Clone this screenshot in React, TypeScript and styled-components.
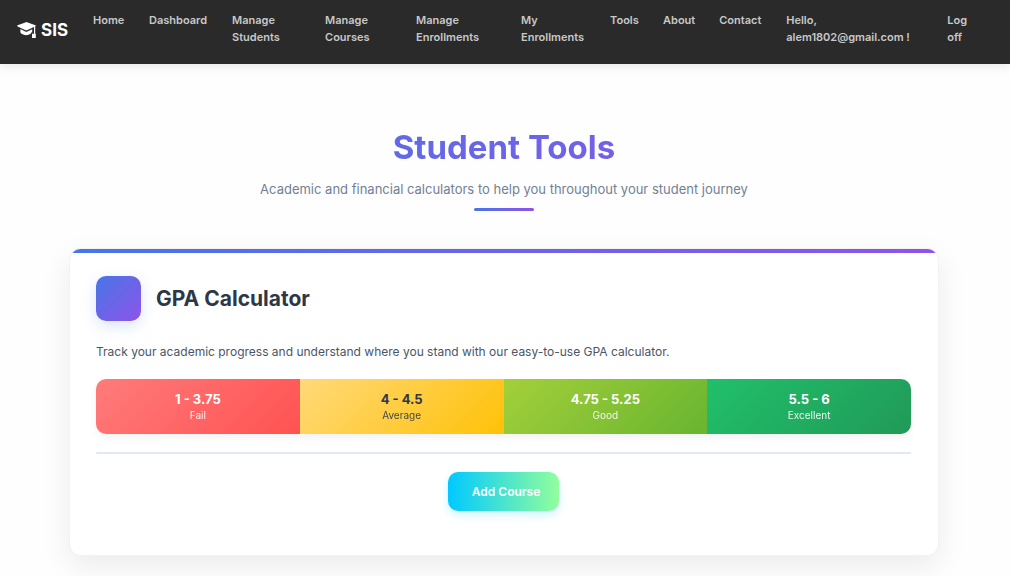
import React from "react";
import styled, { createGlobalStyle } from "styled-components";

const GlobalStyle = createGlobalStyle`
  *, *::before, *::after { box-sizing: border-box; }
  body {
    margin: 0;
    background: #fefefe;
    color: #2d3748;
    font-family: Inter, "Liberation Sans", sans-serif;
    font-size: 12px;
  }
`;

const Navbar = styled.header`
  display: flex;
  align-items: center;
  min-height: 64px;
  padding: 0 12px 0 17px;
  background: #2a2a2a;
  box-shadow: 0 2px 10px rgba(0, 0, 0, 0.1);
`;

const Brand = styled.a`
  display: flex;
  flex: none;
  align-items: center;
  gap: 5px;
  margin: 0 13px 4px 0;
  color: #fff;
  font-size: 17px;
  font-weight: 700;
  line-height: 24px;
  text-decoration: none;
`;

const NavList = styled.ul`
  display: flex;
  flex: 1;
  min-width: 0;
  margin: 0;
  padding: 12px 0 18px;
  list-style: none;
`;

const NavItem = styled.li<{ $width: number }>`
  flex: 0 1 ${({ $width }) => $width}px;
`;

const NavLink = styled.a`
  display: block;
  padding: 0 12px;
  color: #c8c8c8;
  font-size: 11px;
  font-weight: 600;
  line-height: 17px;
  text-decoration: none;
`;

const Page = styled.main`
  padding: 61px 71px 20px 69px;
`;

const Intro = styled.section`
  display: flex;
  flex-direction: column;
  align-items: center;
  margin-bottom: 37px;
  text-align: center;
`;

const Title = styled.h1`
  width: 100%;
  margin: 0 0 9px;
  background: linear-gradient(135deg, #4776e6 0%, #8e54e9 100%);
  background-clip: text;
  -webkit-background-clip: text;
  color: transparent;
  font-size: 33px;
  font-weight: 700;
  line-height: 45px;
`;

const Subtitle = styled.p`
  margin: 0 0 9px;
  color: #718096;
  font-size: 13px;
  line-height: 20px;
`;

const Accent = styled.span`
  width: 60px;
  height: 3px;
  border-radius: 2px;
  background: linear-gradient(to right, #4776e6, #8e54e9);
`;

const Card = styled.section`
  overflow: hidden;
  border: 1px solid rgba(0, 0, 0, 0.05);
  border-radius: 12px;
  background: #fff;
  box-shadow: 0 10px 30px rgba(0, 0, 0, 0.08);
`;

const CardStripe = styled.div`
  height: 4px;
  background: linear-gradient(to right, #4776e6, #8e54e9);
`;

const CardBody = styled.div`
  padding: 23px 27px 44px 26px;
`;

const CardHeader = styled.div`
  display: flex;
  align-items: center;
  gap: 15px;
  margin-bottom: 22px;
`;

const IconTile = styled.span`
  width: 45px;
  height: 45px;
  border-radius: 10px;
  background: linear-gradient(135deg, #4776e6 0%, #8e54e9 100%);
  box-shadow: 0 5px 15px rgba(71, 118, 230, 0.2);
`;

const CardTitle = styled.h2`
  margin: 0;
  color: #2d3748;
  font-size: 21px;
  font-weight: 700;
  line-height: 26px;
`;

const Description = styled.p`
  margin: 0 0 18px;
  color: #4a5568;
  font-size: 12px;
  line-height: 18px;
`;

const Scale = styled.div`
  display: grid;
  grid-template-columns: repeat(4, 1fr);
  overflow: hidden;
  border-radius: 10px;
  box-shadow: 0 4px 10px rgba(0, 0, 0, 0.05);
`;

const Band = styled.div<{ $from: string; $to: string; $color: string }>`
  padding: 11px 8px;
  background: linear-gradient(135deg, ${({ $from }) => $from} 0%, ${({ $to }) => $to} 100%);
  color: ${({ $color }) => $color};
  text-align: center;
`;

const Range = styled.div`
  font-size: 13px;
  font-weight: 700;
  line-height: 18px;
`;

const Grade = styled.div`
  font-size: 10px;
  line-height: 15px;
  opacity: 0.9;
`;

const Divider = styled.hr`
  height: 2px;
  margin: 18px 0;
  border: 0;
  border-radius: 1px;
  background: #e2e8f0;
`;

const AddButton = styled.button`
  display: block;
  margin: 0 auto;
  padding: 10px 19px 10px 24px;
  border: 0;
  border-radius: 10px;
  background: linear-gradient(to right, #00c9ff 0%, #92fe9d 100%);
  box-shadow: 0 4px 10px rgba(0, 201, 255, 0.2);
  color: #fff;
  font: 600 12px/19px Inter, "Liberation Sans", sans-serif;
  cursor: pointer;
`;

const links = [
  { label: "Home", width: 56 },
  { label: "Dashboard", width: 83 },
  { label: "Manage Students", width: 93 },
  { label: "Manage Courses", width: 91 },
  { label: "Manage Enrollments", width: 105 },
  { label: "My Enrollments", width: 89 },
  { label: "Tools", width: 53 },
  { label: "About", width: 56 },
  { label: "Contact", width: 67 },
  { label: "Hello, alem1802@gmail.com !", width: 161 },
  { label: "Log off", width: 44 },
];

const bands = [
  { range: "1 - 3.75", grade: "Fail", from: "#ff7b7b", to: "#ff5252", color: "#fff" },
  { range: "4 - 4.5", grade: "Average", from: "#ffd97a", to: "#ffc107", color: "#2d3748" },
  { range: "4.75 - 5.25", grade: "Good", from: "#a4cf3a", to: "#68b530", color: "#fff" },
  { range: "5.5 - 6", grade: "Excellent", from: "#20c06b", to: "#219a58", color: "#fff" },
];

const MortarboardIcon = () => (
  <svg width="19" height="16" viewBox="0 0 19 16" fill="#fff" aria-hidden="true">
    <path d="M9 .2Q9.5 0 10 .2L18.4 3.3Q19.2 3.8 18.4 4.3L18.2 4.4V11.8H18.8V16H15V11.8H17V5L10 8.2Q9.3 8.5 8.6 8.2L.6 4.4Q-.2 3.8.6 3.3Z" />
    <path d="M3.4 7L8.2 9.4Q9.3 9.9 10.4 9.4L15.2 7.2V10.4H14V11.6Q9.2 14.8 4.6 11.8Q3.4 11 3.4 10Z" />
  </svg>
);

export default function App() {
  return (
    <>
      <GlobalStyle />
      <Navbar>
        <Brand href="#">
          <MortarboardIcon />
          SIS
        </Brand>
        <NavList>
          {links.map(({ label, width }) => (
            <NavItem key={label} $width={width}>
              <NavLink href="#">{label}</NavLink>
            </NavItem>
          ))}
        </NavList>
      </Navbar>
      <Page>
        <Intro>
          <Title>Student Tools</Title>
          <Subtitle>
            Academic and financial calculators to help you throughout your student journey
          </Subtitle>
          <Accent />
        </Intro>
        <Card>
          <CardStripe />
          <CardBody>
            <CardHeader>
              <IconTile />
              <CardTitle>GPA Calculator</CardTitle>
            </CardHeader>
            <Description>
              Track your academic progress and understand where you stand with our easy-to-use GPA
              calculator.
            </Description>
            <Scale>
              {bands.map((band) => (
                <Band key={band.grade} $from={band.from} $to={band.to} $color={band.color}>
                  <Range>{band.range}</Range>
                  <Grade>{band.grade}</Grade>
                </Band>
              ))}
            </Scale>
            <Divider />
            <AddButton type="button">Add Course</AddButton>
          </CardBody>
        </Card>
      </Page>
    </>
  );
}
